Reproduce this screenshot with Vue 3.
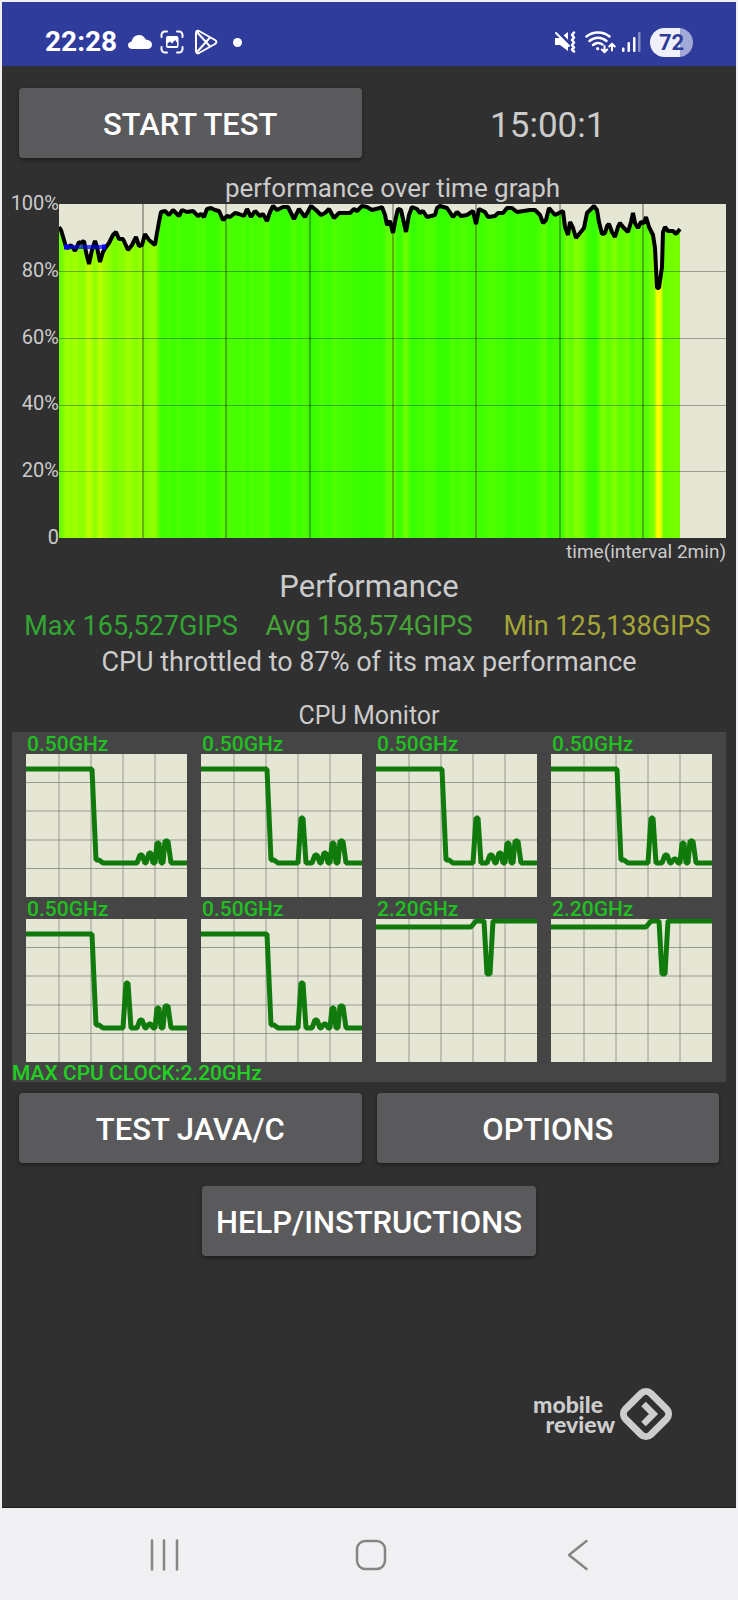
<script setup>
const yLabels = ['100%', '80%', '60%', '40%', '20%', '0']

const samples = [
  [0, 23], [2, 26], [5, 36], [7, 43], [9, 44], [12, 41], [16, 47], [20, 38], [22, 39], [25, 37], [27, 48], [30, 60],
  [33, 46], [36, 37], [38, 43], [41, 58], [44, 48], [47, 43], [50, 39], [54, 31], [57, 28], [60, 35], [64, 35],
  [69, 46], [73, 41], [77, 33], [80, 42], [83, 41], [86, 30], [90, 36], [96, 41], [98, 29], [100, 18], [102, 8],
  [106, 7], [110, 11], [114, 6], [120, 12], [123, 6], [128, 8], [134, 7], [139, 12], [142, 10], [145, 13], [148, 5],
  [152, 4], [156, 6], [160, 7], [164, 16], [168, 12], [171, 13], [176, 9], [180, 10], [185, 12], [188, 5], [192, 13],
  [196, 7], [201, 12], [204, 10], [208, 17], [211, 8], [214, 2], [218, 6], [224, 3], [229, 3], [235, 15], [240, 5],
  [246, 13], [252, 2], [257, 6], [262, 11], [266, 9], [270, 5], [275, 14], [280, 9], [291, 9], [295, 5], [298, 7],
  [303, 2], [308, 3], [313, 6], [321, 4], [323, 3], [326, 11], [328, 21], [331, 17], [334, 29], [337, 13], [339, 5],
  [342, 6], [347, 28], [350, 11], [353, 3], [358, 5], [361, 9], [364, 7], [368, 13], [376, 11], [378, 4], [381, 2],
  [388, 4], [394, 13], [398, 8], [402, 12], [408, 11], [414, 7], [417, 20], [420, 5], [426, 8], [429, 13], [436, 12],
  [439, 9], [444, 9], [448, 4], [453, 4], [458, 8], [471, 6], [476, 6], [481, 11], [484, 19], [487, 16], [490, 4],
  [496, 11], [500, 9], [504, 7], [506, 23], [509, 31], [511, 18], [514, 24], [517, 34], [521, 29], [525, 24],
  [528, 9], [531, 6], [535, 2], [538, 6], [540, 18], [543, 30], [546, 29], [548, 22], [550, 20], [553, 28],
  [556, 33], [559, 23], [561, 19], [564, 23], [569, 28], [572, 18], [574, 9], [576, 19], [579, 24], [582, 18],
  [585, 19], [587, 13], [590, 23], [594, 31], [596, 44], [598, 84], [600, 84], [603, 63], [604, 28], [606, 23],
  [609, 27], [614, 27], [617, 30], [621, 25],
]
const lastX = samples[samples.length - 1][0]
const line = samples.map((p) => p.join(',')).join(' ')
const area = `0,334 ${line} ${lastX},334`
const stops = samples.map(([x, y]) => ({
  offset: x / lastX,
  color: `rgb(${Math.min(255, Math.round(46 + y * 2.5))}, 255, 0)`,
}))
const vLines = [84, 167, 251, 334, 417, 501, 584]
const hLines = [67, 134, 201, 267]

const spike = '97,109 100,64 102,64 105,109 '
const lowCore = (withSpike, second) =>
  '0,15 66,15 70,106 73,106 77,109 ' +
  (withSpike ? spike : '') +
  `111,109 114,101 116,101 119,109 120,109 123,${second} 125,${second} 127,109 129,109 131,89 133,89 135,109 137,109 139,87 142,87 145,109 161,109`
const bigCore = '0,8 95,8 100,2 108,2 111,55 114,55 117,2 161,2'

const cores = [
  { ghz: '0.50GHz', points: lowCore(false, 99) },
  { ghz: '0.50GHz', points: lowCore(true, 99) },
  { ghz: '0.50GHz', points: lowCore(true, 99) },
  { ghz: '0.50GHz', points: lowCore(true, 105) },
  { ghz: '0.50GHz', points: lowCore(true, 105) },
  { ghz: '0.50GHz', points: lowCore(true, 105) },
  { ghz: '2.20GHz', points: bigCore },
  { ghz: '2.20GHz', points: bigCore },
]
</script>

<template>
  <div class="page">
    <header class="status">
      <div class="status-left">
        <span class="clock">22:28</span>
        <svg class="cloud" width="24" height="24" viewBox="0 0 24 24" aria-hidden="true">
          <path d="M4.500 19C2 19 0 17.400 0 15.200c0-2 1.600-3.400 3.600-3.700C4.400 7.800 7.300 5 11 5c3.200 0 5.600 1.700 6.700 4.600C21 9.800 24 11.600 24 14.800 24 17.300 22 19 19.600 19z" fill="#fff" />
        </svg>
        <svg class="capture" width="24" height="24" viewBox="0 0 24 24" fill="none" stroke="#fff" stroke-width="2" stroke-linecap="round" aria-hidden="true">
          <path d="M1.500 7V5a3.500 3.500 0 0 1 3.500-3.500h2M17 1.500h2A3.500 3.500 0 0 1 22.500 5v2M22.500 17v2a3.500 3.500 0 0 1-3.500 3.500h-2M7 22.500H5A3.500 3.500 0 0 1 1.500 19v-2" />
          <rect x="6" y="6" width="12.500" height="12" rx="2" fill="#fff" stroke="none" />
          <path d="M7.500 16v-2.500l2.500-2 2 2 3-3.500 2 2.500V16z" fill="#303c9c" stroke="none" />
        </svg>
        <svg class="play" width="24" height="26" viewBox="0 0 24 26" fill="none" stroke="#fff" stroke-width="2" stroke-linejoin="round" aria-hidden="true">
          <path d="M2 4C2 2 3.500 1.200 5 2l16 9c1.900 1.100 1.900 2.900 0 4L5 24c-1.500.800-3 0-3-2z" />
          <path d="M3 3l13 14.500M3 23L16 8.500" />
        </svg>
        <span class="dot"></span>
      </div>
      <div class="status-right">
        <svg width="22" height="24" viewBox="0 0 22 24" aria-hidden="true">
          <path d="M1 8h5l8-6v19l-8-6H1z" fill="#fff" />
          <path d="M3 .500L15.500 13.500" stroke="#303c9c" stroke-width="3" />
          <path d="M2 3L15 16" stroke="#fff" stroke-width="2" stroke-linecap="round" />
          <path d="M20 2.500l-2 2.500 2 2.500-2 2.500 2 2.500-2 2.500 2 2.500-2 2 2 2" fill="none" stroke="#fff" stroke-width="2.500" stroke-linejoin="round" stroke-linecap="round" />
        </svg>
        <svg class="wifi" width="32" height="24" viewBox="0 0 32 24" fill="none" stroke="#fff" stroke-width="2.500" stroke-linecap="round" aria-hidden="true">
          <path d="M2.500 6.500c6.500-5.400 16.500-5.400 23 0M5.500 11c5-4.300 12-4.300 17 0M9 15c3-2.500 6.500-2.500 9.500-.500" />
          <circle cx="13.700" cy="18.700" r="1.600" fill="#fff" stroke="none" />
          <path d="M20.500 16v6M17.800 19.500l2.700 2.800 2.700-2.800M28 20.500v-6.500M25.300 16.500l2.700-2.800 2.700 2.800" stroke-width="2" stroke-linejoin="round" />
        </svg>
        <svg class="signal" width="20" height="24" viewBox="0 0 20 24" fill="#fff" aria-hidden="true">
          <rect x="0" y="17.500" width="2.500" height="4.500" rx="1" />
          <rect x="5.500" y="12" width="2.500" height="10" rx="1" />
          <rect x="11" y="7" width="2.500" height="15" rx="1" />
          <rect x="16" y="2" width="2.500" height="20" rx="1" opacity=".4" />
        </svg>
        <span class="battery">72</span>
      </div>
    </header>

    <main class="content">
      <section class="pair top">
        <button type="button" class="btn">START TEST</button>
        <div class="timer">15:00:1</div>
      </section>

      <section class="graph">
        <h2 class="graph-title">performance over time graph</h2>
        <div class="y-axis">
          <span v-for="l in yLabels" :key="l">{{ l }}</span>
        </div>
        <svg class="plot" viewBox="0 0 667 334" role="img" aria-label="performance over time graph">
          <defs>
            <linearGradient id="heat" gradientUnits="userSpaceOnUse" x1="0" y1="0" :x2="lastX" y2="0">
              <stop v-for="(s, i) in stops" :key="i" :offset="s.offset" :stop-color="s.color" />
            </linearGradient>
          </defs>
          <rect width="667" height="334" fill="#e6e6d4" />
          <polygon :points="area" fill="url(#heat)" />
          <g stroke="#000" stroke-opacity=".32">
            <path v-for="y in hLines" :key="y" :d="`M0 ${y + 0.5}H667`" />
          </g>
          <g stroke="#222" stroke-opacity=".7">
            <path v-for="x in vLines" :key="x" :d="`M${x} 0V334`" />
          </g>
          <polyline :points="line" fill="none" stroke="#000" stroke-width="4" stroke-linejoin="bevel" />
          <path d="M5 43H47" stroke="#00f" stroke-opacity=".7" stroke-width="4" />
          <path d="M5 43H10M43 43H47" stroke="#00f" stroke-width="5" />
        </svg>
        <div class="x-label">time(interval 2min)</div>
      </section>

      <section class="results">
        <h2>Performance</h2>
        <div class="stats">
          <span class="max">Max 165,527GIPS</span>
          <span class="avg">Avg 158,574GIPS</span>
          <span class="min">Min 125,138GIPS</span>
        </div>
        <p>CPU throttled to 87% of its max performance</p>
      </section>

      <section class="monitor">
        <h2>CPU Monitor</h2>
        <div class="panel">
          <div class="cores">
            <div v-for="(c, i) in cores" :key="i" class="core">
              <div class="ghz">{{ c.ghz }}</div>
              <svg viewBox="0 0 161 143" aria-hidden="true">
                <rect width="161" height="143" fill="#e6e6d4" />
                <path d="M33 0V143M65 0V143M97 0V143M129 0V143M0 28.500H161M0 57H161M0 86H161M0 114.500H161" stroke="#808080" stroke-opacity=".75" />
                <polyline :points="c.points" fill="none" stroke="#117a0d" stroke-width="5" stroke-linejoin="bevel" />
              </svg>
            </div>
          </div>
          <div class="max-clock">MAX CPU CLOCK:2.20GHz</div>
        </div>
      </section>

      <section class="pair actions">
        <button type="button" class="btn">TEST JAVA/C</button>
        <button type="button" class="btn">OPTIONS</button>
      </section>
      <button type="button" class="btn help">HELP/INSTRUCTIONS</button>

      <div class="brand">
        <div class="brand-text"><span>mobile</span><span>review</span></div>
        <svg width="54" height="54" viewBox="0 0 54 54" aria-hidden="true">
          <rect x="9" y="9" width="36" height="36" rx="7" transform="rotate(45 27 27)" fill="none" stroke="#cdcdcd" stroke-width="7" />
          <path d="M24.500 17L34.500 27L24.500 37" fill="none" stroke="#cdcdcd" stroke-width="6.500" />
        </svg>
      </div>
    </main>

    <nav class="nav">
      <button type="button" aria-label="Recent apps">
        <svg width="32" height="32" viewBox="0 0 32 32"><path d="M4 1.500v29M16 1.500v29M29 1.500v29" stroke="#858585" stroke-width="2.500" stroke-linecap="round" /></svg>
      </button>
      <button type="button" aria-label="Home">
        <svg width="32" height="32" viewBox="0 0 32 32"><rect x="2" y="2" width="28" height="28" rx="8.500" fill="none" stroke="#858585" stroke-width="2.500" /></svg>
      </button>
      <button type="button" aria-label="Back">
        <svg width="32" height="32" viewBox="0 0 32 32"><path d="M24.500 2L7 16l17.500 14" fill="none" stroke="#858585" stroke-width="2.500" stroke-linecap="round" stroke-linejoin="round" /></svg>
      </button>
    </nav>
  </div>
</template>

<style>
body {
  background: #f0f0f3;
}
</style>

<style scoped>
.page {
  box-sizing: border-box;
  min-height: 100vh;
  padding: 2px;
  display: flex;
  flex-direction: column;
  background: #f0f0f3;
  font-family: Roboto, "Liberation Sans", sans-serif;
  color: #cbcbcb;
}
h2,
p {
  margin: 0;
  font-weight: 400;
}
.status {
  display: flex;
  justify-content: space-between;
  align-items: center;
  height: 48px;
  padding: 16px 43px 0;
  background: #303c9c;
  color: #fff;
}
.status-left,
.status-right {
  display: flex;
  align-items: center;
}
.clock {
  font-size: 28px;
  line-height: 32px;
  font-weight: 700;
}
.cloud {
  margin-left: 11px;
}
.capture {
  margin-left: 8px;
}
.play {
  margin-left: 10px;
}
.dot {
  width: 9px;
  height: 9px;
  margin-left: 15px;
  border-radius: 50%;
  background: #fff;
}
.wifi {
  margin-left: 8px;
}
.signal {
  margin-left: 6px;
}
.battery {
  width: 43px;
  margin-left: 8px;
  border-radius: 15px;
  background: linear-gradient(90deg, #f0f0fa 70%, #a3a9d6 70%);
  color: #303c9c;
  font-size: 22px;
  line-height: 29px;
  font-weight: 700;
  text-align: center;
}
.content {
  flex: 1;
  display: flex;
  flex-direction: column;
  background: #303030;
  border-bottom: 1px solid #1c1c1c;
}
.pair {
  display: grid;
  grid-template-columns: 1fr 1fr;
  gap: 15px;
  padding: 0 17px;
}
.top {
  padding-top: 22px;
}
.actions {
  padding-top: 11px;
}
.btn {
  height: 70px;
  padding: 2px 14px 0;
  border: 0;
  border-radius: 4px;
  background: #5a5a5c;
  box-shadow: 0 2px 4px rgba(0, 0, 0, 0.4);
  color: #fff;
  font-family: inherit;
  font-size: 31px;
  font-weight: 500;
}
.help {
  align-self: center;
  margin-top: 23px;
}
.timer {
  align-self: center;
  padding-top: 5px;
  text-align: center;
  font-size: 35px;
  line-height: 40px;
}
.graph {
  display: grid;
  grid-template-columns: 47px 1fr;
  padding: 14px 10px 0;
}
.graph-title {
  grid-column: 2;
  font-size: 26px;
  line-height: 32px;
  text-align: center;
}
.y-axis {
  display: flex;
  flex-direction: column;
  justify-content: space-between;
  align-items: flex-end;
  margin: -11px 0 -9px;
  font-size: 20px;
  line-height: 20px;
}
.plot {
  display: block;
  width: 100%;
}
.x-label {
  grid-column: 2;
  padding-top: 2px;
  font-size: 19px;
  line-height: 24px;
  text-align: right;
}
.results {
  padding: 5px 10px 0;
  text-align: center;
}
.results h2 {
  font-size: 31px;
  line-height: 36px;
}
.results p {
  font-size: 27px;
  line-height: 36px;
}
.stats {
  display: grid;
  grid-template-columns: repeat(3, 1fr);
  margin-top: 3px;
  font-size: 27px;
  line-height: 36px;
}
.max {
  color: #32a532;
}
.avg {
  color: #46a537;
}
.min {
  color: #a5a537;
}
.monitor {
  padding: 20px 10px 0;
}
.monitor h2 {
  font-size: 25px;
  line-height: 32px;
  text-align: center;
}
.panel {
  background: #454545;
}
.cores {
  display: grid;
  grid-template-columns: repeat(4, 1fr);
  column-gap: 14px;
  padding: 0 14px;
}
.core svg {
  display: block;
  width: 100%;
}
.ghz {
  height: 22px;
  padding-left: 1px;
  color: #20c020;
  font-size: 21px;
  line-height: 24px;
  font-weight: 500;
}
.max-clock {
  height: 20px;
  color: #20d020;
  font-size: 21px;
  line-height: 22px;
  font-weight: 500;
}
.brand {
  display: flex;
  align-items: center;
  gap: 4px;
  align-self: flex-end;
  margin: 131px 63px 66px 0;
  color: #cdcdcd;
}
.brand-text {
  display: flex;
  flex-direction: column;
  align-items: flex-end;
  font-family: Lato, sans-serif;
  font-size: 23px;
  line-height: 20px;
  font-weight: 900;
}
.brand-text span:first-child {
  padding-right: 12px;
}
.nav {
  display: grid;
  grid-template-columns: repeat(3, 1fr);
  align-items: center;
  height: 89px;
  padding: 2px 55px 0 58px;
}
.nav button {
  display: flex;
  justify-content: center;
  padding: 8px;
  border: 0;
  background: none;
}
.nav svg {
  display: block;
}
</style>
